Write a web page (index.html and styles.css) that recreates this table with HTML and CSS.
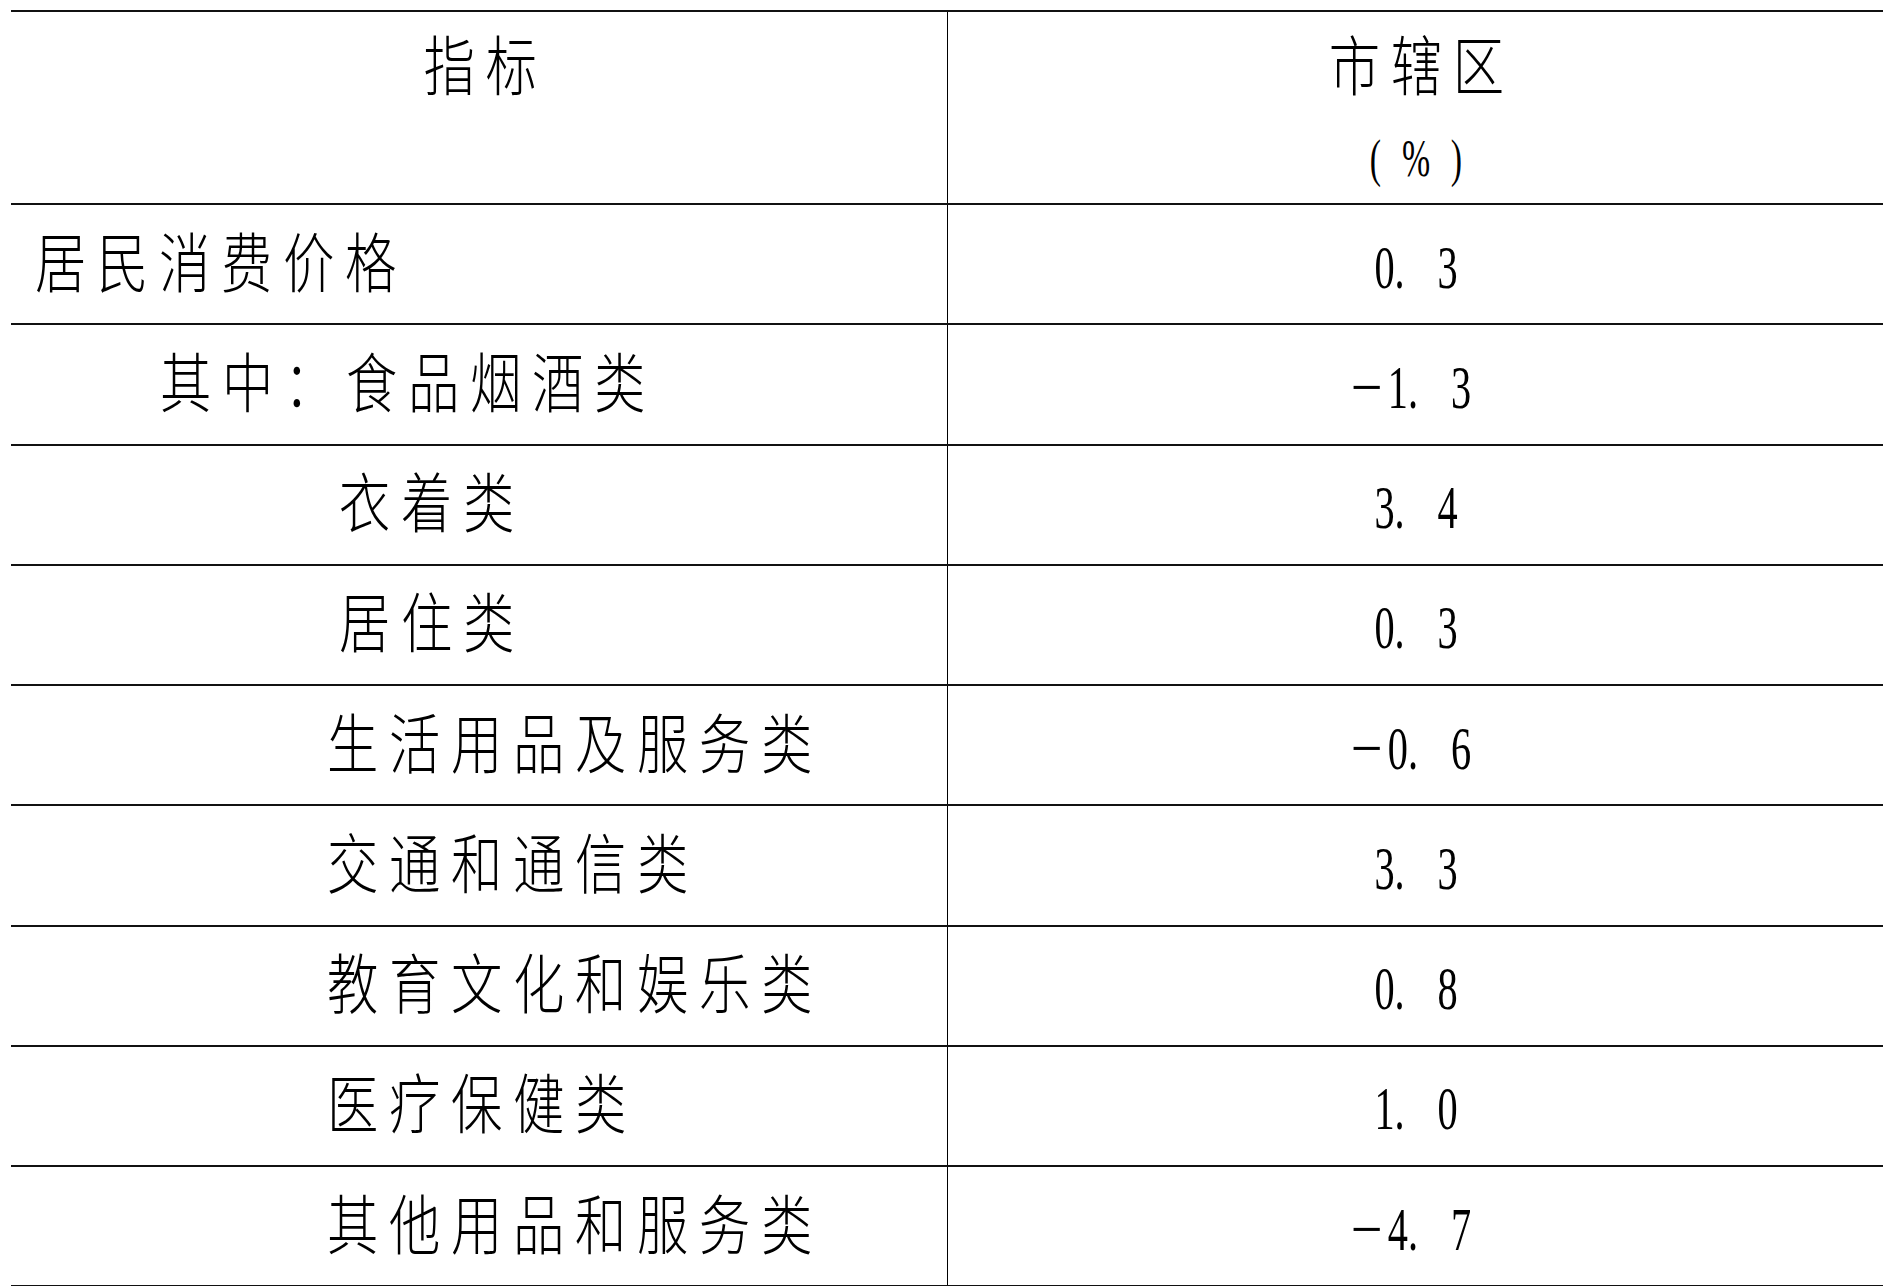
FILE: index.html
```html
<!DOCTYPE html>
<html lang="zh-CN">
<head>
<meta charset="utf-8">
<title>居民消费价格</title>
<link rel="stylesheet" href="styles.css">
</head>
<body>
<div class="sheet">
  <div class="row head">
    <div class="cell name"><span class="zh">指标</span></div>
    <div class="cell val"><span class="zh">市辖区</span><span class="num unit">( % )</span></div>
  </div>
  <div class="row">
    <div class="cell name lvl0"><span class="zh">居民消费价格</span></div>
    <div class="cell val"><span class="num">0. 3</span></div>
  </div>
  <div class="row">
    <div class="cell name lvl1"><span class="zh">其中：食品烟酒类</span></div>
    <div class="cell val"><span class="num"><span class="minus">−</span>1. 3</span></div>
  </div>
  <div class="row">
    <div class="cell name lvl3"><span class="zh">衣着类</span></div>
    <div class="cell val"><span class="num">3. 4</span></div>
  </div>
  <div class="row">
    <div class="cell name lvl3"><span class="zh">居住类</span></div>
    <div class="cell val"><span class="num">0. 3</span></div>
  </div>
  <div class="row">
    <div class="cell name lvl2"><span class="zh">生活用品及服务类</span></div>
    <div class="cell val"><span class="num"><span class="minus">−</span>0. 6</span></div>
  </div>
  <div class="row">
    <div class="cell name lvl2"><span class="zh">交通和通信类</span></div>
    <div class="cell val"><span class="num">3. 3</span></div>
  </div>
  <div class="row">
    <div class="cell name lvl2"><span class="zh">教育文化和娱乐类</span></div>
    <div class="cell val"><span class="num">0. 8</span></div>
  </div>
  <div class="row">
    <div class="cell name lvl2"><span class="zh">医疗保健类</span></div>
    <div class="cell val"><span class="num">1. 0</span></div>
  </div>
  <div class="row">
    <div class="cell name lvl2"><span class="zh">其他用品和服务类</span></div>
    <div class="cell val"><span class="num"><span class="minus">−</span>4. 7</span></div>
  </div>
</div>
</body>
</html>
```
FILE: styles.css
```css
html, body {
  margin: 0;
  padding: 0;
  background: #ffffff;
  color: #000000;
}

.sheet {
  margin: 10px 0 0 11px;
  width: 1872px;
  border-top: 2px solid #111;
}

.row {
  display: grid;
  grid-template-columns: 936px 936px;
  height: 120.25px;
  border-bottom: 2px solid #111;
  box-sizing: border-box;
}

.row.head {
  height: 193px;
}

.cell {
  display: flex;
  align-items: center;
  box-sizing: border-box;
}

.name {
  padding-bottom: 10px;
}

.val {
  border-left: 1px solid #000;
  justify-content: center;
  padding-top: 5px;
}

.head .cell {
  flex-direction: column;
  justify-content: flex-start;
  align-items: center;
  padding-top: 18px;
  padding-bottom: 0;
}

.zh {
  display: inline-block;
  font-family: "Noto Sans CJK SC", "Noto Sans", sans-serif;
  font-weight: 300;
  font-size: 65px;
  line-height: 65px;
  letter-spacing: 13.5px;
  white-space: nowrap;
  transform: scaleX(0.79);
  transform-origin: left center;
}

.head .zh {
  margin-right: -13.5px;
  transform-origin: center center;
}

.num {
  display: inline-block;
  font-family: "Liberation Serif", "Times New Roman", serif;
  font-size: 62px;
  line-height: 62px;
  word-spacing: 35px;
  white-space: nowrap;
  transform: scaleX(0.65);
  transform-origin: center center;
}

.minus {
  display: inline-block;
  transform: scaleX(1.4);
  transform-origin: right center;
  margin-right: 8px;
}

.num.unit {
  font-size: 52px;
  line-height: 52px;
  word-spacing: 19px;
  margin-top: 38px;
}

.lvl0 { padding-left: 24px; }
.lvl1 { padding-left: 149px; }
.lvl2 { padding-left: 316px; }
.lvl3 { padding-left: 328px; }
```
